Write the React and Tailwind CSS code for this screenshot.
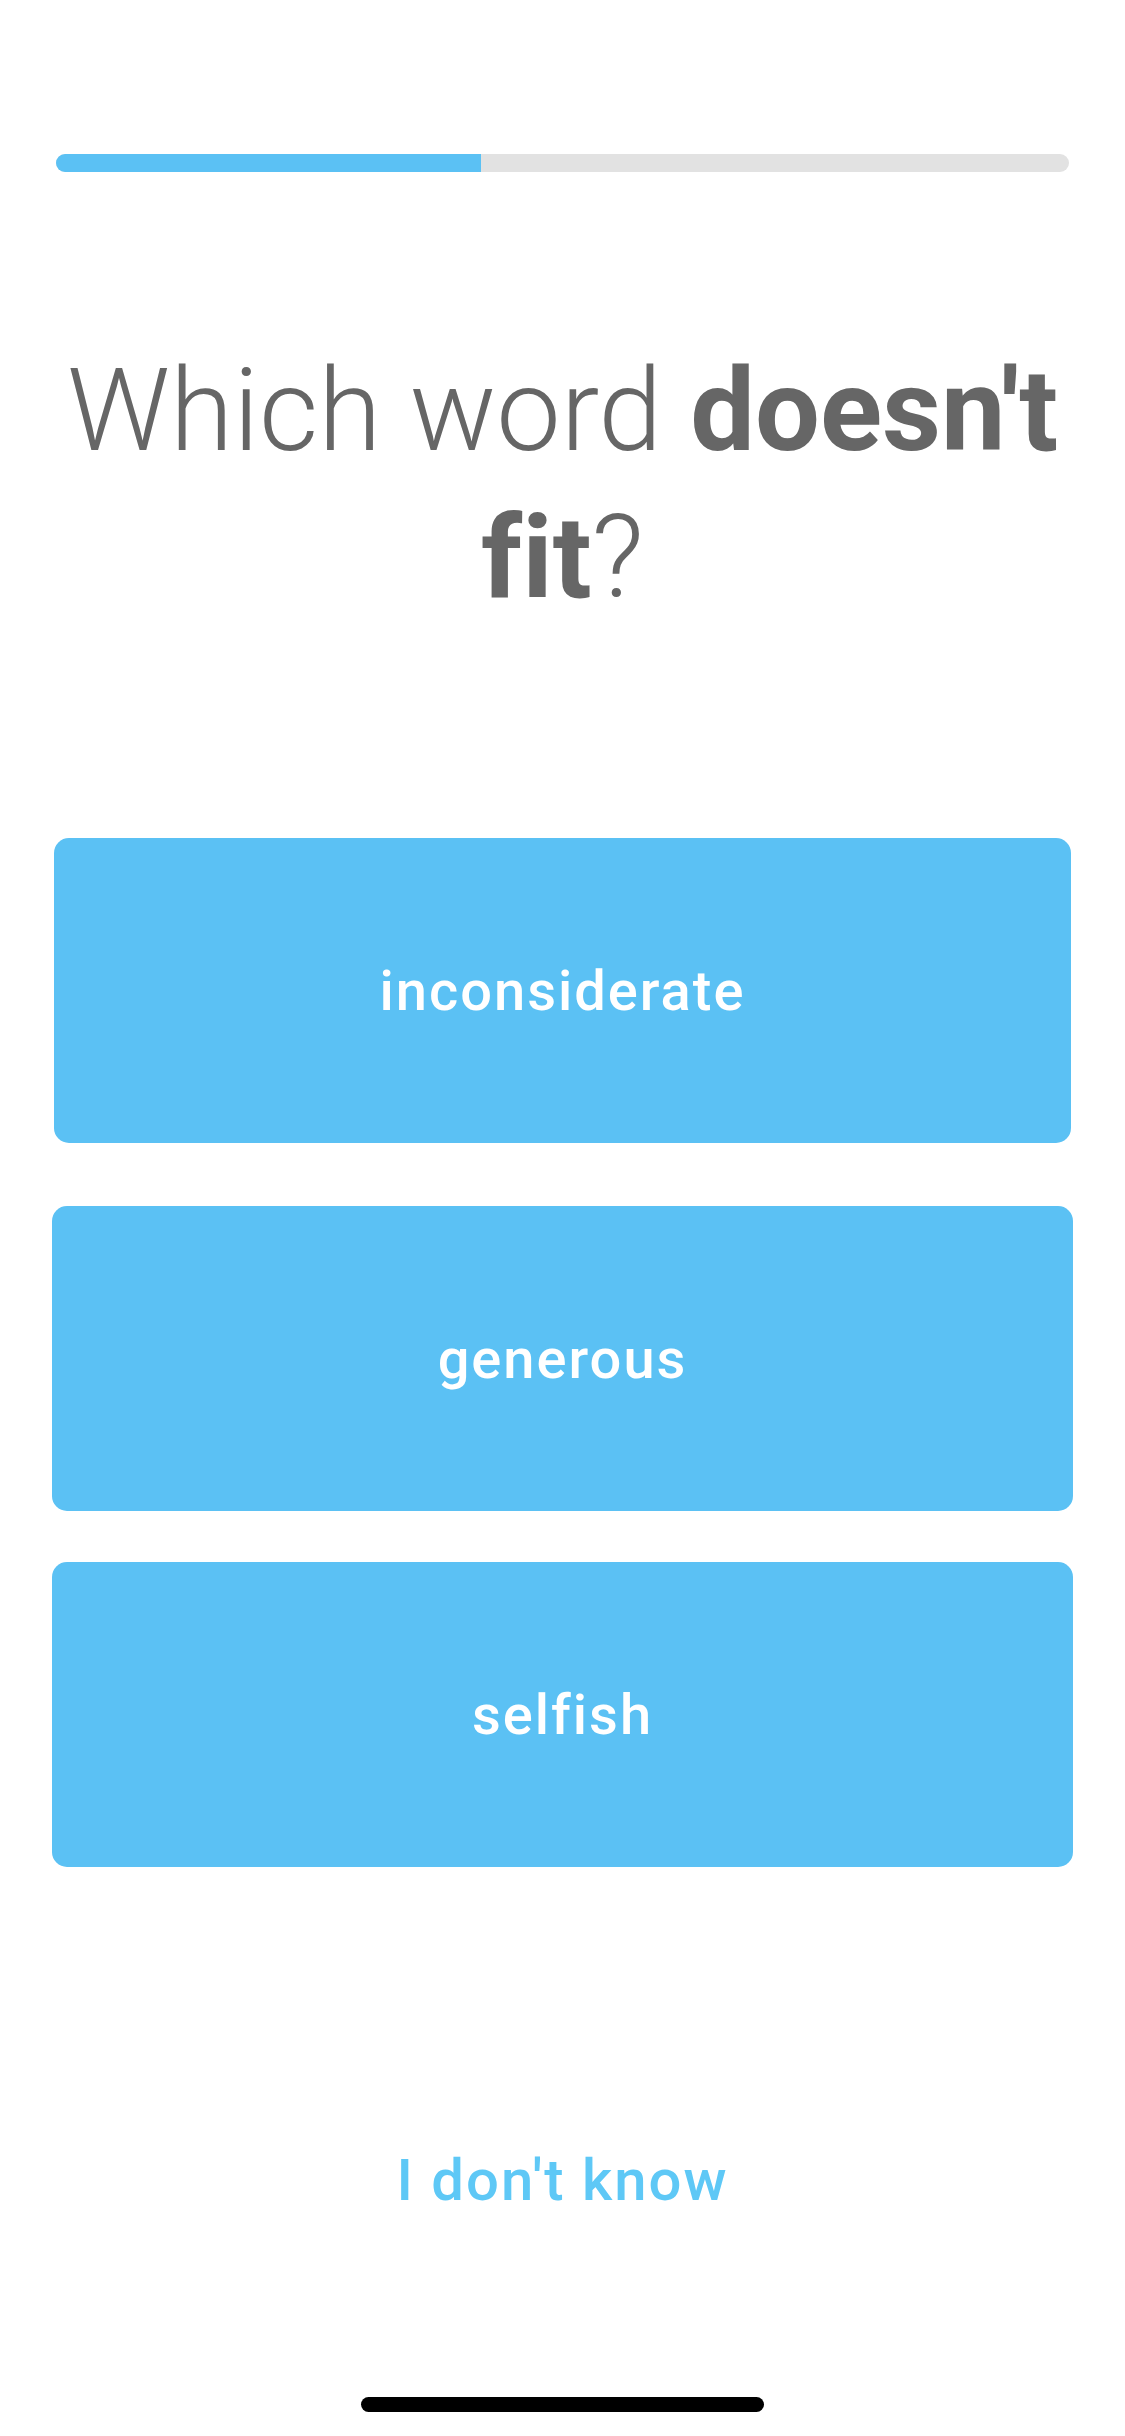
import React from 'react'

const OPTIONS = [
  { label: 'inconsiderate', cls: 'mx-[2px] mt-0' },
  { label: 'generous', cls: 'mt-[63px]' },
  { label: 'selfish', cls: 'mt-[51px]' },
]

export default function App() {
  const progress = 42

  return (
    <div className="min-h-[2436px] w-[1125px] bg-white flex flex-col font-['Roboto',sans-serif] [font-variant-ligatures:none]">
      {/* Progress */}
      <div className="mt-[154px] mx-[56px] h-[18px] rounded-full bg-[#e2e2e2] overflow-hidden">
        <div className="h-full bg-[#5bc1f4]" style={{ width: `${progress}%` }} />
      </div>

      {/* Question */}
      <h1 className="mt-[165px] px-[40px] text-center text-[115px] leading-[147px] text-[#666666] font-light">
        Which word <span className="font-bold">doesn't fit</span>?
      </h1>

      {/* Answers */}
      <div className="mt-[207px] px-[52px] flex flex-col">
        {OPTIONS.map((opt) => (
          <button
            key={opt.label}
            className={`h-[305px] rounded-[15px] bg-[#5bc1f4] flex items-center justify-center text-white text-[56px] font-medium tracking-[2px] ${opt.cls}`}
          >
            {opt.label}
          </button>
        ))}
      </div>

      {/* Skip */}
      <div className="mt-[270px] flex justify-center">
        <button className="text-[#5ec8f6] text-[58px] font-medium tracking-[2px]">I don't know</button>
      </div>

      {/* Home indicator */}
      <div className="mt-auto mb-[24px] flex justify-center">
        <div className="w-[403px] h-[15px] rounded-full bg-black" />
      </div>
    </div>
  )
}
